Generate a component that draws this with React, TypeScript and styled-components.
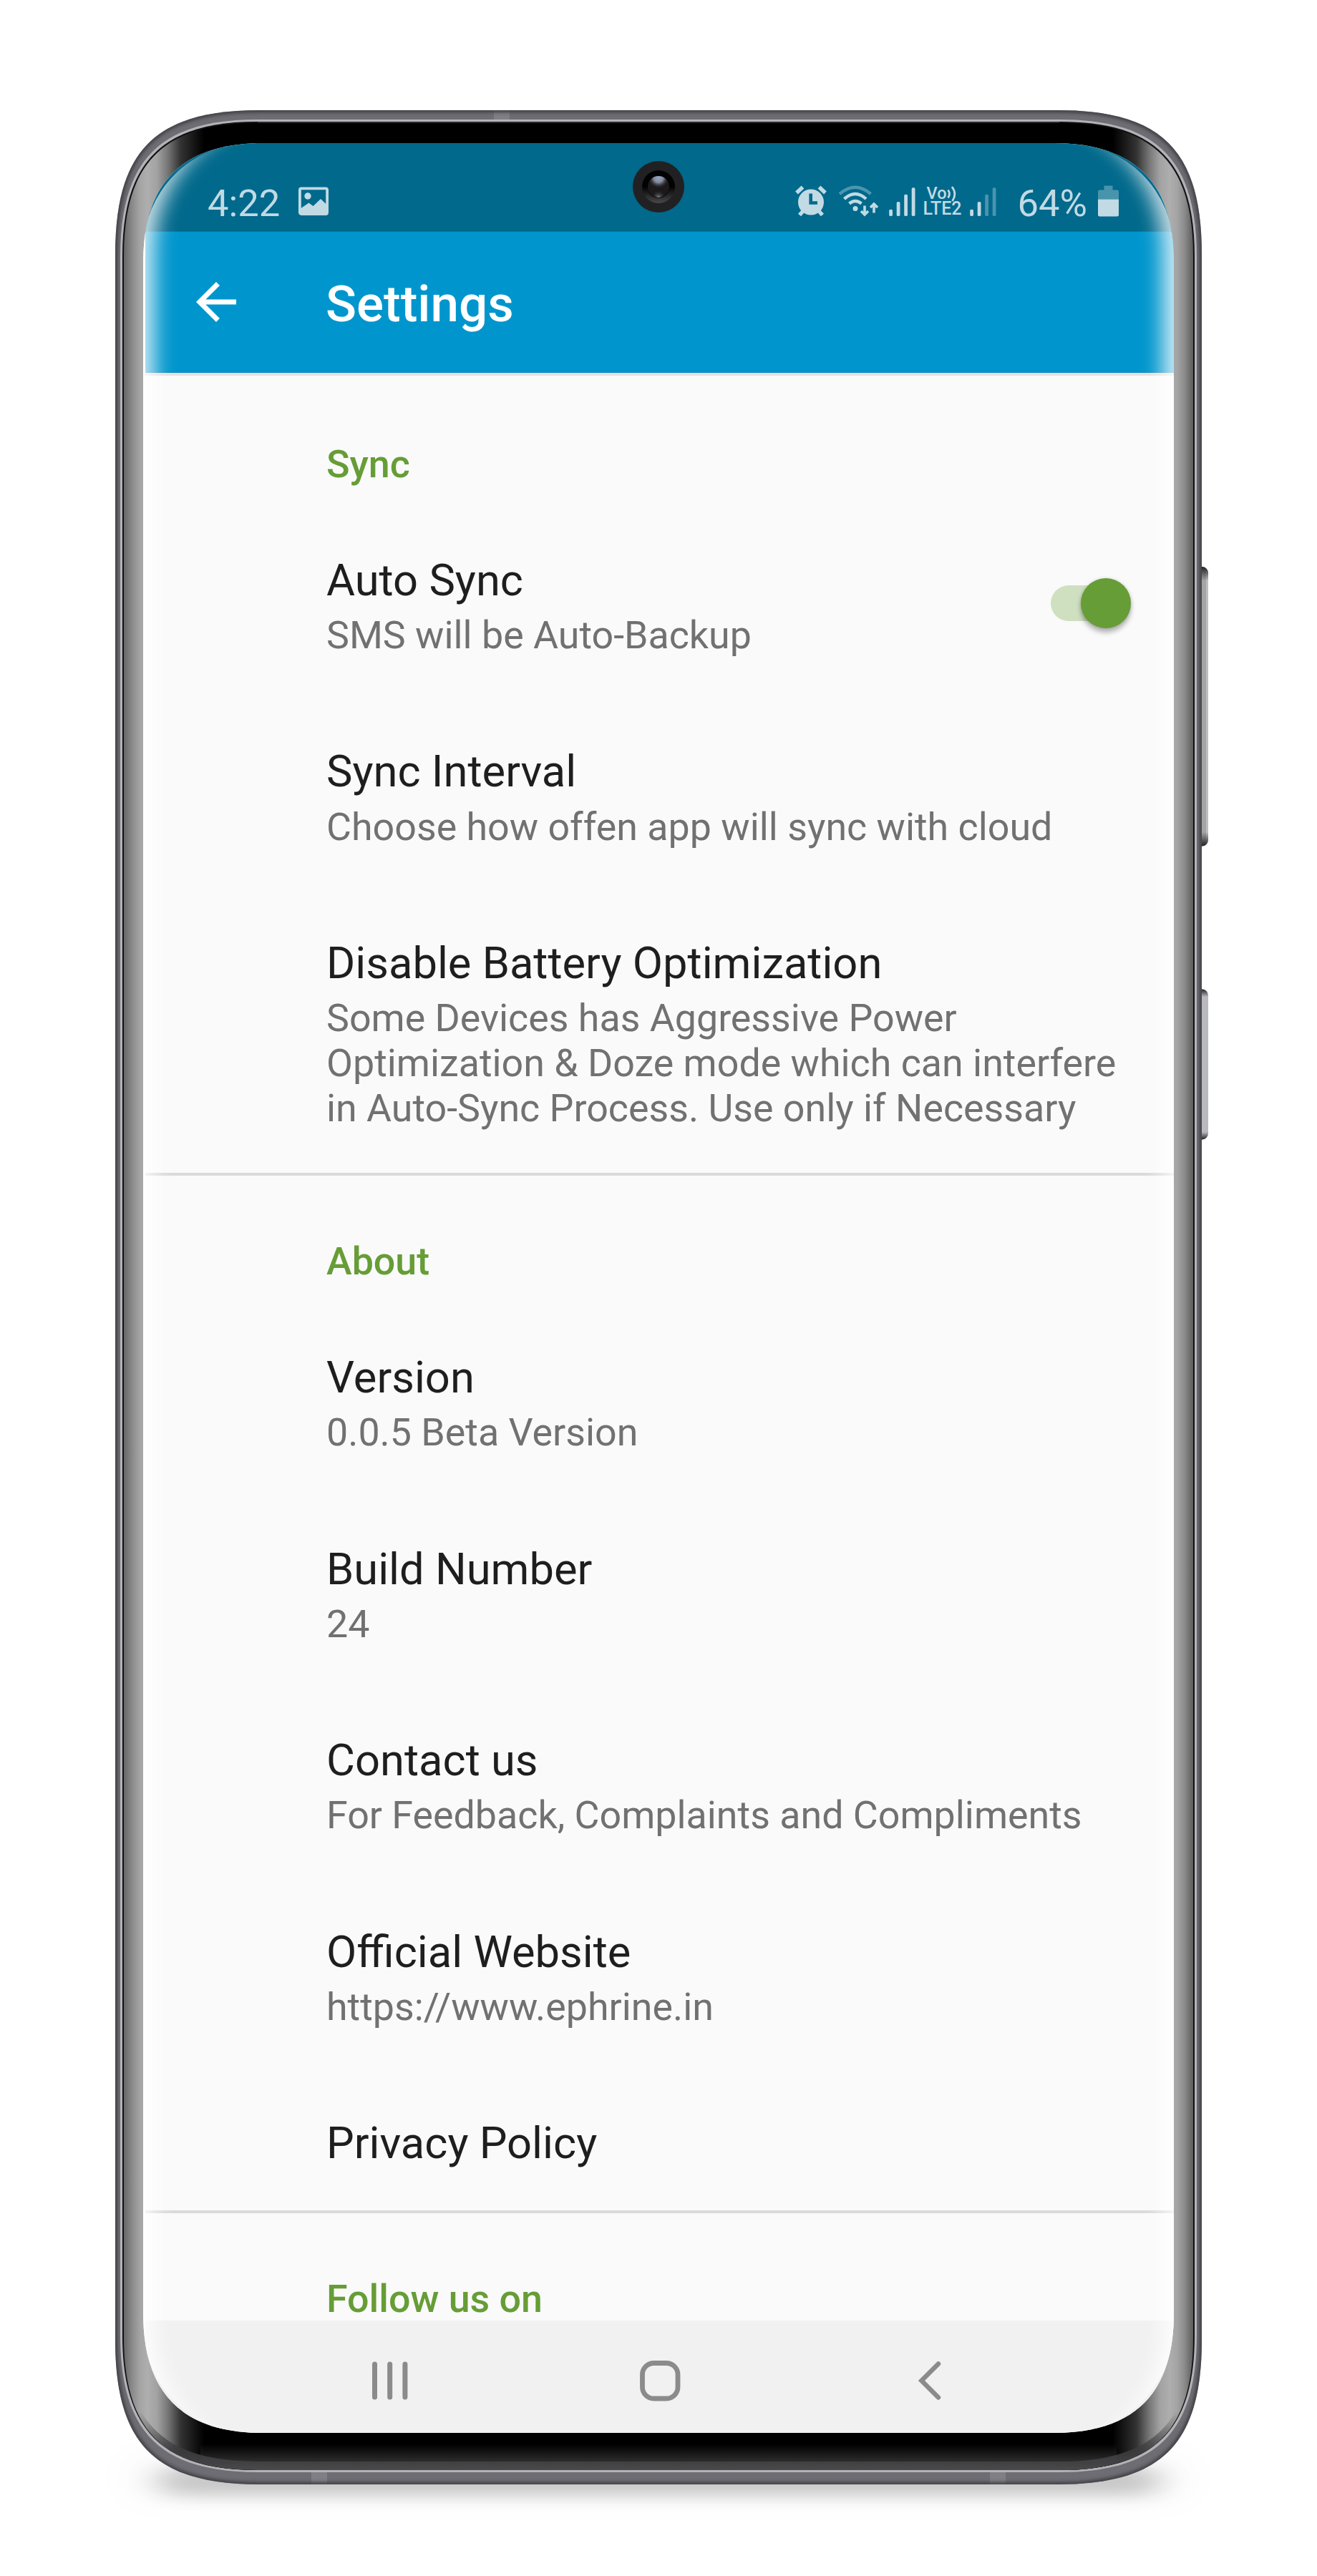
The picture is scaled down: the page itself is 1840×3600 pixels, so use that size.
import React from "react";
import styled, { createGlobalStyle, css } from "styled-components";

/** Rounded rectangle with smooth (continuous curvature) corners. */
function smoothRect(
  l: number,
  t: number,
  r: number,
  b: number,
  extent: number,
  handle: number
): string {
  const e = extent;
  const h = handle;
  return [
    `M${l + e} ${t}`,
    `H${r - e}`,
    `C${r - h} ${t} ${r} ${t + h} ${r} ${t + e}`,
    `V${b - e}`,
    `C${r} ${b - h} ${r - h} ${b} ${r - e} ${b}`,
    `H${l + e}`,
    `C${l + h} ${b} ${l} ${b - h} ${l} ${b - e}`,
    `V${t + e}`,
    `C${l} ${t + h} ${l + h} ${t} ${l + e} ${t}`,
    "Z",
  ].join(" ");
}

const SCREEN_CLIP = smoothRect(0, 0, 1440, 3200, 168, 55);

const GlobalStyle = createGlobalStyle`
  html, body { margin: 0; padding: 0; background: #fff; }
  body { font-family: Roboto, "Liberation Sans", sans-serif; }
  * { box-sizing: border-box; }
`;

const Stage = styled.main`
  position: relative;
  width: 1840px;
  height: 3600px;
  padding: 200px;
  background: #fff;
  overflow: hidden;
`;

const FrameSvg = styled.svg`
  position: absolute;
  inset: 0;
  width: 1840px;
  height: 3600px;
`;

const Screen = styled.div`
  position: relative;
  width: 1440px;
  height: 3200px;
  padding-left: 3px;
  display: flex;
  flex-direction: column;
  background: #fff;
  clip-path: path("${SCREEN_CLIP}");
`;

const EdgeGlow = styled.div`
  position: absolute;
  inset: 0;
  border-radius: 150px;
  pointer-events: none;
  box-shadow: inset 56px 0 28px -40px rgba(255, 255, 255, 0.8),
    inset -56px 0 28px -40px rgba(255, 255, 255, 0.8);
`;

const Camera = styled.svg`
  position: absolute;
  left: 684px;
  top: 25px;
  width: 72px;
  height: 72px;
`;

const StatusBar = styled.header`
  flex: none;
  height: 124px;
  padding: 58px 77px 0 87px;
  display: flex;
  justify-content: space-between;
  align-items: flex-start;
  background: #00698c;
  border-bottom: 1px solid #0078a1;
  color: #c1dae4;
`;

const StatusGroup = styled.div`
  display: flex;
  align-items: flex-start;
`;

const StatusText = styled.span<{ $gap?: number }>`
  margin-left: ${(p) => p.$gap ?? 0}px;
  font-size: 52.5px;
  line-height: 62px;
  margin-top: -5px;
  white-space: nowrap;
`;

const StatusIcon = styled.svg<{ $w: number; $gap: number }>`
  flex: none;
  width: ${(p) => p.$w}px;
  height: 46px;
  margin-left: ${(p) => p.$gap}px;
`;

const Network = styled.div`
  width: 56px;
  margin-left: 11px;
  display: flex;
  flex-direction: column;
  font-weight: 500;
`;

const VoiceLine = styled.div`
  display: flex;
  height: 24px;
  padding-left: 5px;
  font-size: 23.5px;
  line-height: 24px;
`;

const LteLine = styled.div`
  font-size: 25px;
  line-height: 24px;
  margin-top: -2px;
  white-space: nowrap;
`;

const AppBar = styled.div`
  flex: none;
  height: 197px;
  padding-left: 57px;
  display: flex;
  align-items: center;
  background: #0096cd;
  border-bottom: 1px solid #0085c0;
`;

const BackButton = styled.button`
  width: 84px;
  height: 84px;
  padding: 0;
  border: 0;
  background: none;
  color: #fff;
  svg {
    display: block;
    width: 84px;
    height: 84px;
  }
`;

const AppTitle = styled.h1`
  margin: 6px 0 0 111px;
  font-size: 71px;
  font-weight: 500;
  line-height: 82px;
  color: #fff;
`;

const Preferences = styled.div`
  flex: 1;
  min-height: 0;
  overflow: hidden;
  padding-top: 7.5px;
  background: #fafafa;
  box-shadow: inset 0 4px 0 #e6dfde;
`;

const Section = styled.section<{ $divided?: boolean }>`
  padding-left: 253px;
  ${(p) =>
    p.$divided &&
    css`
      border-bottom: 4px solid #dadada;
    `}
`;

const Category = styled.h2`
  margin: 0;
  padding: 88px 0 33.5px;
  font-size: 53.75px;
  font-weight: 500;
  line-height: 63.2px;
  color: #669d36;
`;

const Row = styled.div<{ $last?: boolean }>`
  display: flex;
  align-items: center;
  padding: 61.5px 57px ${(p) => (p.$last ? 58.2 : 61.5)}px 0;
`;

const RowText = styled.div`
  flex: 1;
  min-width: 0;
`;

const RowTitle = styled.div`
  font-size: 61.45px;
  line-height: 72px;
  color: #1e1e1e;
`;

const RowSummary = styled.div`
  margin-top: 9.3px;
  font-size: 53.75px;
  line-height: 63.2px;
  color: #717171;
  white-space: pre-line;
`;

const SwitchTrack = styled.div`
  flex: none;
  width: 98px;
  height: 50px;
  margin: -8px 17px 0 0;
  border-radius: 25px;
  display: flex;
  align-items: center;
  justify-content: flex-end;
  background: #cfe0c1;
`;

const SwitchThumb = styled.div`
  flex: none;
  width: 70px;
  height: 70px;
  margin-right: -14px;
  border-radius: 50%;
  background: #669d36;
  box-shadow: 0 6px 7px rgba(0, 0, 0, 0.28), 0 0 5px rgba(0, 0, 0, 0.14);
`;

const NavBar = styled.nav`
  flex: none;
  height: 157px;
  padding: 6px 0 0 0;
  display: flex;
  justify-content: center;
  gap: 319px;
  background: #f1f1f1;
  color: #8b8b8b;
`;

const NavIcon = styled.svg`
  width: 58px;
  height: 156px;
`;

function DeviceFrame() {
  const outer = smoothRect(161, 154, 1679, 3472, 202, 56);
  const ring = smoothRect(168, 167, 1672, 3455, 192, 56);
  const groove = smoothRect(171, 170, 1669, 3452, 188, 56);
  const glass = smoothRect(173, 172, 1667, 3452, 186, 55.5);
  const lip = smoothRect(173, 172, 1667, 3440, 186, 55.5);
  return (
    <FrameSvg viewBox="0 0 1840 3600" aria-hidden="true">
      <defs>
        <filter id="soft" x="-20%" y="-20%" width="140%" height="140%">
          <feGaussianBlur stdDeviation="2.6" />
        </filter>
        <filter id="shadowNear" filterUnits="userSpaceOnUse" x="60" y="3300" width="1720" height="300">
          <feGaussianBlur stdDeviation="24 11" />
        </filter>
        <filter id="shadowFar" filterUnits="userSpaceOnUse" x="60" y="3300" width="1720" height="300">
          <feGaussianBlur stdDeviation="30 26" />
        </filter>
        <linearGradient id="glass" gradientUnits="userSpaceOnUse" x1="173" y1="0" x2="1667" y2="0">
          <stop offset="0" stopColor="#666" />
          <stop offset="0.008" stopColor="#8b8b8b" />
          <stop offset="0.015" stopColor="#a4a4a4" />
          <stop offset="0.022" stopColor="#aeaeae" />
          <stop offset="0.031" stopColor="#a2a2a2" />
          <stop offset="0.041" stopColor="#777" />
          <stop offset="0.053" stopColor="#333" />
          <stop offset="0.075" stopColor="#000" />
          <stop offset="0.925" stopColor="#000" />
          <stop offset="0.947" stopColor="#333" />
          <stop offset="0.959" stopColor="#777" />
          <stop offset="0.969" stopColor="#a2a2a2" />
          <stop offset="0.978" stopColor="#aeaeae" />
          <stop offset="0.985" stopColor="#a4a4a4" />
          <stop offset="0.992" stopColor="#8b8b8b" />
          <stop offset="1" stopColor="#5c5c5c" />
        </linearGradient>
        <linearGradient id="chin" gradientUnits="userSpaceOnUse" x1="0" y1="3416" x2="0" y2="3440">
          <stop offset="0" stopColor="#2c2c2d" stopOpacity="0" />
          <stop offset="1" stopColor="#2c2c2d" stopOpacity="1" />
        </linearGradient>
        <linearGradient id="lip" gradientUnits="userSpaceOnUse" x1="0" y1="3370" x2="0" y2="3452">
          <stop offset="0" stopColor="#3c3c3e" stopOpacity="0" />
          <stop offset="0.7" stopColor="#3c3c3e" stopOpacity="0.9" />
          <stop offset="1" stopColor="#4a4a4c" stopOpacity="1" />
        </linearGradient>
        <linearGradient id="keyCap" x1="0" y1="0" x2="0" y2="1">
          <stop offset="0" stopColor="#222" />
          <stop offset="0.05" stopColor="#222" stopOpacity="0" />
          <stop offset="0.95" stopColor="#222" stopOpacity="0" />
          <stop offset="1" stopColor="#222" />
        </linearGradient>
        <clipPath id="body">
          <path d={outer} />
        </clipPath>
      </defs>

      <rect x="170" y="3430" width="1500" height="64" rx="32" fill="#000" opacity="0.025" filter="url(#shadowFar)" />
      <rect x="222" y="3446" width="1396" height="42" rx="21" fill="#000" opacity="0.2" filter="url(#shadowNear)" />

      <path d="M1678 792h2a8 9 0 0 1 8 9v372.500a8 9 0 0 1-8 9h-2z" fill="#a3a4a8" />
      <path d="M1685 796q3 2 3 5v372q0 4-3 6z" fill="#bdbdbf" />
      <path d="M1678 792h2a8 9 0 0 1 8 9v372.500a8 9 0 0 1-8 9h-2z" fill="url(#keyCap)" />
      <path d="M1678 1382.500h2a8 9 0 0 1 8 9v192a8 9 0 0 1-8 9h-2z" fill="#b9bac0" />
      <path d="M1678 1382.500h2a8 9 0 0 1 8 9v192a8 9 0 0 1-8 9h-2z" fill="url(#keyCap)" />

      <path d={outer} fill="#6e6d73" />
      <g clipPath="url(#body)">
        <rect x="690" y="154" width="22" height="14" fill="#807f85" />
        <rect x="435" y="3454" width="22" height="18" fill="#807f85" />
        <rect x="1383" y="3454" width="22" height="18" fill="#807f85" />
        <path d={outer} fill="none" stroke="#3c3b40" strokeWidth="6" filter="url(#soft)" />
      </g>
      <path d={ring} fill="#b3b2b7" />
      <path d={groove} fill="#111113" />
      <rect x="360" y="170" width="1120" height="2" fill="#2c2c30" />
      <path d={glass} fill="url(#glass)" />
      <rect x="280" y="3416" width="1280" height="24" fill="url(#chin)" />
      <path d={`${glass} ${lip}`} fillRule="evenodd" fill="url(#lip)" />
    </FrameSvg>
  );
}

function FrontCamera() {
  return (
    <Camera viewBox="0 0 72 72" aria-hidden="true">
      <defs>
        <linearGradient id="well" x1="0" y1="0" x2="0" y2="1">
          <stop offset="0.5" stopColor="#020203" />
          <stop offset="1" stopColor="#4a4a4a" />
        </linearGradient>
        <radialGradient id="glint" cx="0.5" cy="0.08" r="0.5">
          <stop offset="0" stopColor="#8fa9c4" />
          <stop offset="0.45" stopColor="#85889a" />
          <stop offset="1" stopColor="#1b191b" stopOpacity="0" />
        </radialGradient>
        <radialGradient id="glow" cx="0.5" cy="1" r="0.34">
          <stop offset="0" stopColor="#8a8a8a" />
          <stop offset="1" stopColor="#1b191b" stopOpacity="0" />
        </radialGradient>
      </defs>
      <circle cx="36" cy="36" r="36" fill="#212123" />
      <circle cx="36" cy="36" r="23" fill="url(#well)" />
      <circle cx="36" cy="36.300" r="15.500" fill="#0a0a0a" />
      <circle cx="36" cy="36" r="15" fill="#1b191b" />
      <circle cx="36" cy="36" r="15" fill="url(#glint)" />
      <circle cx="36" cy="36" r="15" fill="url(#glow)" />
    </Camera>
  );
}

function SignalBars({ level, gap }: { level: number; gap: number }) {
  const tops = [34.7, 24, 13.7, 4.3];
  return (
    <StatusIcon $w={37} $gap={gap} viewBox="0 0 37 46">
      {tops.map((y, i) => (
        <rect
          key={y}
          x={0.2 + i * 10.5}
          y={y}
          width="4.800"
          height={44 - y}
          rx="1.800"
          fill="currentColor"
          opacity={i < level ? 1 : 0.38}
        />
      ))}
    </StatusIcon>
  );
}

function SystemStatus() {
  return (
    <StatusBar>
      <StatusGroup>
        <StatusText>4:22</StatusText>
        <StatusIcon $w={42} $gap={26} viewBox="0 0 42 46">
          <rect x="1.900" y="5.400" width="38.200" height="35.700" rx="2" fill="none" stroke="currentColor" strokeWidth="3.800" />
          <circle cx="13" cy="16" r="4.700" fill="currentColor" />
          <path d="M2 34 14.500 25.500 20.500 30 31 20 40 28.500V42H2z" fill="currentColor" />
        </StatusIcon>
      </StatusGroup>
      <StatusGroup>
        <StatusIcon $w={44} $gap={0} viewBox="0 0 44 46">
          <g fill="none" stroke="currentColor" strokeWidth="5.500">
            <path d="M2 11.500 10.500 3.500M33.500 3.500 42 11.500" />
            <path d="M11 37 6 42.500M33 37 38 42.500" />
          </g>
          <circle cx="22" cy="24.500" r="18" fill="currentColor" />
          <path d="M21.700 12.500V25.500H31" fill="none" stroke="#00698c" strokeWidth="4.600" />
        </StatusIcon>
        <StatusIcon $w={57} $gap={16} viewBox="0 0 57 46">
          <g fill="none" stroke="currentColor" strokeWidth="4.400">
            <path d="M2 13Q24 -5.500 45.500 13" opacity="0.4" />
            <path d="M8.500 20Q24 6 39 20" />
            <path d="M15.500 26.500Q24 19.500 32.500 26.500" />
          </g>
          <circle cx="24" cy="33.500" r="3.500" fill="currentColor" />
          <g fill="none" stroke="currentColor" strokeWidth="3.600">
            <path d="M37 29.500V41M32 37 37 42 42 37" />
            <path d="M50 39.500V28M45 32 50 27 55 32" />
          </g>
        </StatusIcon>
        <SignalBars level={4} gap={14} />
        <Network>
          <VoiceLine>
            Vo
            <svg width="14" height="24" viewBox="0 0 14 24">
              <g fill="none" stroke="currentColor" strokeWidth="2.800">
                <path d="M1.500 7.500Q5.500 13 1.500 18.500" />
                <path d="M7 3Q14.500 13 7.500 23" />
              </g>
            </svg>
          </VoiceLine>
          <LteLine>LTE2</LteLine>
        </Network>
        <SignalBars level={2} gap={9} />
        <StatusText $gap={30}>64%</StatusText>
        <StatusIcon $w={29} $gap={15} viewBox="0 0 29 46">
          <path d="M8.500 1.500h12v6h-12z" fill="currentColor" opacity="0.38" />
          <path d="M2 7.500h25q2 0 2 2v11H0v-11q0-2 2-2z" fill="currentColor" opacity="0.38" />
          <path d="M0 20.500h29V42q0 2.500-2.500 2.500h-24Q0 44.500 0 42z" fill="currentColor" />
        </StatusIcon>
      </StatusGroup>
    </StatusBar>
  );
}

interface Preference {
  title: string;
  summary?: string;
  toggle?: boolean;
}

interface PreferenceGroup {
  name: string;
  items: Preference[];
}

const groups: PreferenceGroup[] = [
  {
    name: "Sync",
    items: [
      { title: "Auto Sync", summary: "SMS will be Auto-Backup", toggle: true },
      { title: "Sync Interval", summary: "Choose how offen app will sync with cloud" },
      {
        title: "Disable Battery Optimization",
        summary:
          "Some Devices has Aggressive Power\nOptimization & Doze mode which can interfere\nin Auto-Sync Process. Use only if Necessary",
      },
    ],
  },
  {
    name: "About",
    items: [
      { title: "Version", summary: "0.0.5 Beta Version" },
      { title: "Build Number", summary: "24" },
      { title: "Contact us", summary: "For Feedback, Complaints and Compliments" },
      { title: "Official Website", summary: "https://www.ephrine.in" },
      { title: "Privacy Policy" },
    ],
  },
  { name: "Follow us on", items: [] },
];

function PreferenceRow({ item, last }: { item: Preference; last: boolean }) {
  return (
    <Row $last={last}>
      <RowText>
        <RowTitle>{item.title}</RowTitle>
        {item.summary && <RowSummary>{item.summary}</RowSummary>}
      </RowText>
      {item.toggle && (
        <SwitchTrack role="switch" aria-checked="true">
          <SwitchThumb />
        </SwitchTrack>
      )}
    </Row>
  );
}

export default function App() {
  return (
    <>
      <GlobalStyle />
      <Stage>
        <DeviceFrame />
        <Screen>
          <SystemStatus />
          <AppBar>
            <BackButton aria-label="Navigate up">
              <svg viewBox="0 0 24 24" fill="currentColor">
                <path d="M20 11H7.830l5.590-5.590L12 4l-8 8 8 8 1.410-1.410L7.830 13H20v-2z" />
              </svg>
            </BackButton>
            <AppTitle>Settings</AppTitle>
          </AppBar>
          <Preferences>
            {groups.map((group) => (
              <Section key={group.name} $divided={group.items.length > 0}>
                <Category>{group.name}</Category>
                {group.items.map((item, i) => (
                  <PreferenceRow key={item.title} item={item} last={i === group.items.length - 1} />
                ))}
              </Section>
            ))}
          </Preferences>
          <NavBar>
            <NavIcon viewBox="0 0 58 156">
              <g fill="currentColor">
                <rect x="4" y="51.500" width="7" height="53" rx="3.500" />
                <rect x="25.200" y="51.500" width="7" height="53" rx="3.500" />
                <rect x="46.400" y="51.500" width="7" height="53" rx="3.500" />
              </g>
            </NavIcon>
            <NavIcon viewBox="0 0 58 156">
              <rect x="4.500" y="53.500" width="49.500" height="49.500" rx="16" fill="none" stroke="currentColor" strokeWidth="6.800" />
            </NavIcon>
            <NavIcon viewBox="0 0 58 156">
              <path d="M41 54.500 17.500 78 41 101.500" fill="none" stroke="currentColor" strokeWidth="6.500" strokeLinecap="round" />
            </NavIcon>
          </NavBar>
          <EdgeGlow />
          <FrontCamera />
        </Screen>
      </Stage>
    </>
  );
}
